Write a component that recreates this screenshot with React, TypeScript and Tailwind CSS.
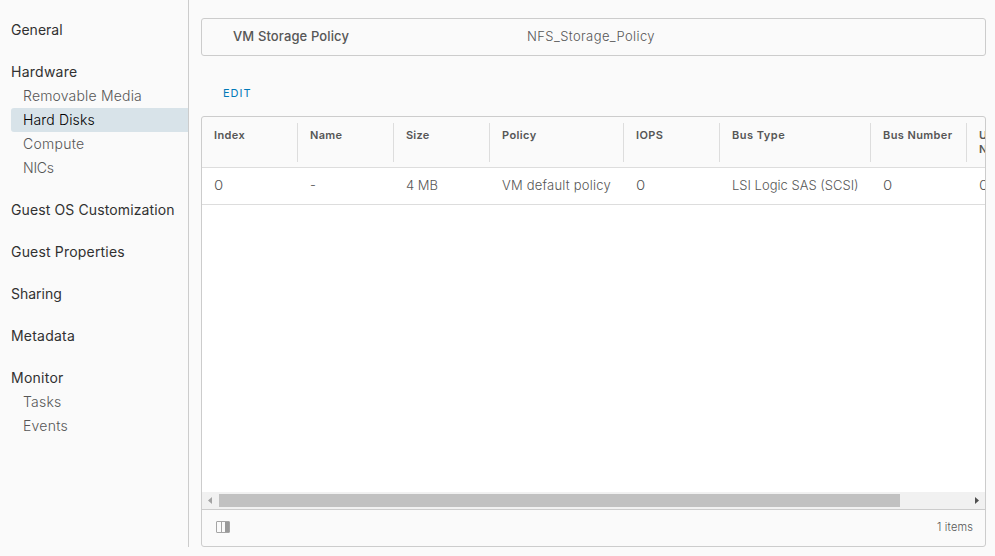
import React from "react";

type NavGroup = { title: string; track: string; items?: { label: string; track: string; active?: boolean }[] };

const groups: NavGroup[] = [
  { title: "General", track: "" },
  {
    title: "Hardware",
    track: "tracking-[0.25px]",
    items: [
      { label: "Removable Media", track: "tracking-[0.18px]" },
      { label: "Hard Disks", track: "tracking-[0.15px]", active: true },
      { label: "Compute", track: "tracking-[0.25px]" },
      { label: "NICs", track: "tracking-[-0.25px]" },
    ],
  },
  { title: "Guest OS Customization", track: "tracking-[0.12px]" },
  { title: "Guest Properties", track: "tracking-[0.18px]" },
  { title: "Sharing", track: "" },
  { title: "Metadata", track: "tracking-[0.22px]" },
  {
    title: "Monitor",
    track: "tracking-[0.25px]",
    items: [
      { label: "Tasks", track: "tracking-[0.2px]" },
      { label: "Events", track: "tracking-[0.25px]" },
    ],
  },
];

const columns = [
  { head: "Index", value: "0", width: "w-24", headTrack: "tracking-[0.4px]", track: "" },
  { head: "Name", value: "-", width: "w-24", headTrack: "tracking-[0.3px]", track: "" },
  { head: "Size", value: "4 MB", width: "w-24", headTrack: "tracking-[0.2px]", track: "" },
  { head: "Policy", value: "VM default policy", width: "w-[134px]", headTrack: "tracking-[0.4px]", track: "tracking-[0.22px]" },
  { head: "IOPS", value: "0", width: "w-24", headTrack: "tracking-[0.4px]", track: "" },
  { head: "Bus Type", value: "LSI Logic SAS (SCSI)", width: "w-[151px]", headTrack: "tracking-[0.5px]", track: "" },
  { head: "Bus Number", value: "0", width: "w-24", headTrack: "tracking-[0.4px]", track: "" },
  { head: "Unit Number", value: "0", width: "w-[72px]", headTrack: "", track: "" },
];

function Sidebar() {
  return (
    <nav className="flex h-[547px] w-[189px] shrink-0 flex-col gap-[18px] border-r border-[#ccc] pt-[18px] pl-[11px] text-sm leading-6">
      {groups.map((g) => (
        <div key={g.title}>
          <div className={`whitespace-nowrap text-[#313131] ${g.track}`}>{g.title}</div>
          {g.items?.map((i) => (
            <div
              key={i.label}
              className={`rounded-l-[3px] pl-3 whitespace-nowrap ${i.active ? "bg-[#d8e3e9] text-black" : "text-[#565656]"} font-light ${i.track}`}
            >
              {i.label}
            </div>
          ))}
        </div>
      ))}
    </nav>
  );
}

function DataGrid() {
  return (
    <section className="flex h-[431px] flex-col overflow-hidden rounded-[3px] border border-[#ccc]">
      <div className="flex h-[51px] shrink-0 border-b border-[#ddd] pt-1.5 pb-[5px]">
        {columns.map((c, n) => (
          <div
            key={c.head}
            className={`${c.width} shrink-0 pt-[5px] pl-3 text-[11px] leading-[14px] font-semibold text-[#565656] ${n < 7 ? "h-[39px] border-r border-[#ddd]" : ""} ${c.headTrack}`}
          >
            {c.head}
          </div>
        ))}
      </div>
      <div className="flex h-[37px] shrink-0 items-center border-b border-[#ddd] bg-white pb-0.5">
        {columns.map((c) => (
          <div key={c.head} className={`${c.width} shrink-0 pl-3 text-[13px] leading-6 font-light whitespace-nowrap text-[#565656] ${c.track}`}>
            {c.value === "0" ? <span className="inline-block origin-left scale-x-115">0</span> : c.value}
          </div>
        ))}
      </div>
      <div className="flex-1 bg-white" />
      <div className="flex h-[17px] shrink-0 items-center bg-[#f1f1f1]">
        <svg className="h-[17px] w-[17px]" viewBox="0 0 17 17"><path d="M10 5v7L6 8.5z" fill="#a3a3a3" /></svg>
        <div className="h-[13px] w-[681px] bg-[#c1c1c1]" />
        <div className="flex-1" />
        <svg className="h-[17px] w-[17px]" viewBox="0 0 17 17"><path d="M7 5v7l4-3.5z" fill="#505050" /></svg>
      </div>
      <footer className="flex h-[37px] shrink-0 items-center justify-between border-t border-[#ccc] pr-3 pb-0.5 pl-[14px]">
        <svg className="h-3 w-[14px]" viewBox="0 0 14 12" fill="none">
          <rect x=".5" y=".5" width="13" height="11" rx=".5" stroke="#a5a5a5" />
          <path d="M5.5 1v10" stroke="#a5a5a5" />
          <path d="M9 1h4v10H9z" fill="#999" />
        </svg>
        <span className="text-[11px] font-light tracking-[0.15px] text-[#565656]">1 items</span>
      </footer>
    </section>
  );
}

export default function App() {
  return (
    <div className="flex h-[556px] w-[995px] overflow-hidden bg-[#fafafa] font-['Inter','Liberation_Sans',sans-serif]">
      <Sidebar />
      <main className="ml-3 w-[785px] pt-[18px]">
        <div className="flex h-[38px] items-center rounded-[3px] border border-[#ccc] pl-[31px] text-[13px] text-[#565656]">
          <div className="w-[294px] font-medium tracking-[0.12px]">VM Storage Policy</div>
          <div className="font-light tracking-[0.4px]">NFS_Storage_Policy</div>
        </div>
        <div className="flex h-[60px] items-center pt-[14px] pl-[22px]">
          <button className="text-[11px] tracking-[1px] text-[#0079b8]">EDIT</button>
        </div>
        <DataGrid />
      </main>
    </div>
  );
}
